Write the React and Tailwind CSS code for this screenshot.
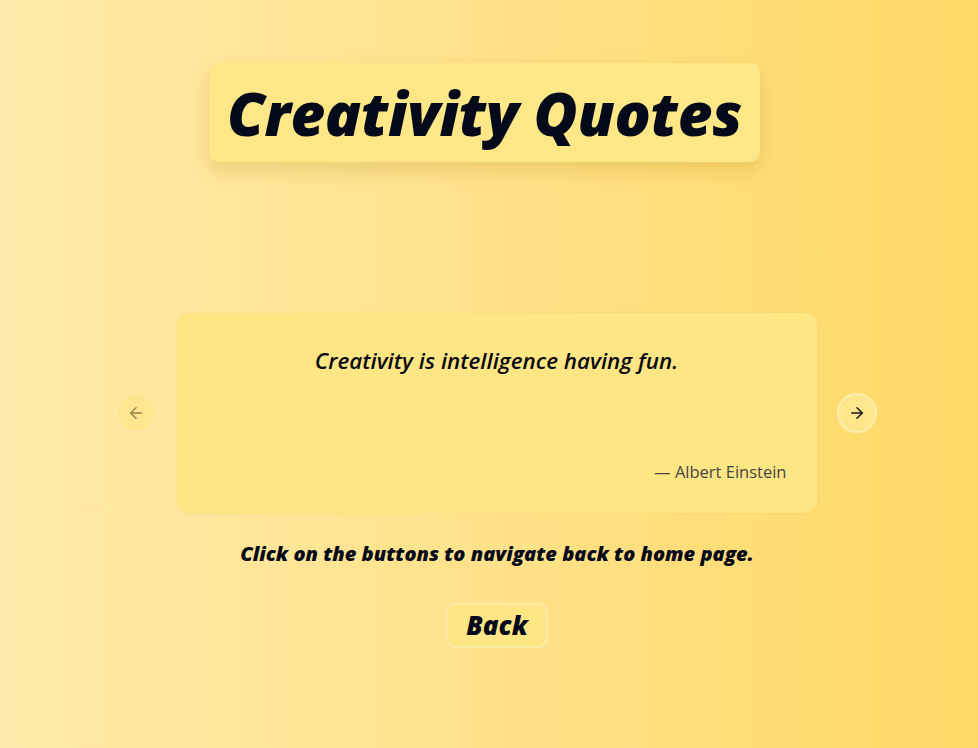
import React, { useState } from "react";

const quotes = [
  { text: "Creativity is intelligence having fun.", author: "Albert Einstein" },
  { text: "You can't use up creativity. The more you use, the more you have.", author: "Maya Angelou" },
];

function ArrowLeft() {
  return (
    <svg width="18" height="18" viewBox="0 0 24 24" fill="none" stroke="currentColor" strokeWidth="2" strokeLinecap="round" strokeLinejoin="round">
      <path d="M19 12H5" />
      <path d="M12 19l-7-7 7-7" />
    </svg>
  );
}

function ArrowRight() {
  return (
    <svg width="18" height="18" viewBox="0 0 24 24" fill="none" stroke="currentColor" strokeWidth="2" strokeLinecap="round" strokeLinejoin="round">
      <path d="M5 12h14" />
      <path d="M12 5l7 7-7 7" />
    </svg>
  );
}

export default function App() {
  const [index, setIndex] = useState(0);
  const quote = quotes[index];

  return (
    <div className="min-h-screen w-full bg-gradient-to-r from-[#feeaa9] to-[#ffd964] font-['Open_Sans','Noto_Sans',sans-serif] flex flex-col items-center pt-[63px] pl-[16px]">
      {/* title */}
      <div className="mr-[25px] bg-[#fee786] rounded-[10px] shadow-[0_8px_18px_rgba(180,140,20,0.25)] px-[18px] h-[99px] flex items-center">
        <h1 className="text-[60px] font-extrabold italic text-[#050a1a] tracking-[-0.3px] leading-none">
          Creativity Quotes
        </h1>
      </div>

      {/* carousel */}
      <div className="mt-[151px] flex items-center">
        <button
          disabled={index === 0}
          onClick={() => setIndex(index - 1)}
          className="mr-[23px] w-9 h-9 rounded-full bg-[#fee58a] text-[#7a6a3a] flex items-center justify-center disabled:opacity-80 shadow-[0_0_4px_rgba(255,240,180,0.6)]"
        >
          <ArrowLeft />
        </button>
        <div className="w-[640px] h-[200px] rounded-[12px] bg-[#fee685] flex flex-col px-[30px] pt-[34px] pb-[33px] shadow-[0_0_2px_rgba(230,200,90,0.4)]">
          <p className="text-center text-[22.4px] font-semibold italic text-[#0a0a14] leading-tight">
            {quote.text}
          </p>
          <p className="mt-auto text-right text-[16.5px] text-[#454545] leading-none">
            — {quote.author}
          </p>
        </div>
        <button
          disabled={index === quotes.length - 1}
          onClick={() => setIndex(index + 1)}
          className="ml-[20px] w-10 h-10 rounded-full bg-[#fee68c] text-[#1a1a1a] border-2 border-[#fdeeb0] flex items-center justify-center disabled:opacity-50"
        >
          <ArrowRight />
        </button>
      </div>

      <p className="mt-[26px] text-[20px] font-extrabold italic text-[#050a1a]">
        Click on the buttons to navigate back to home page.
      </p>

      <button className="mt-[34px] w-[102px] h-[45px] rounded-[9px] bg-[#fee685] border-2 border-[#fdebaa] text-[26px] font-extrabold italic text-[#050a1a] flex items-center justify-center">
        Back
      </button>
    </div>
  );
}
